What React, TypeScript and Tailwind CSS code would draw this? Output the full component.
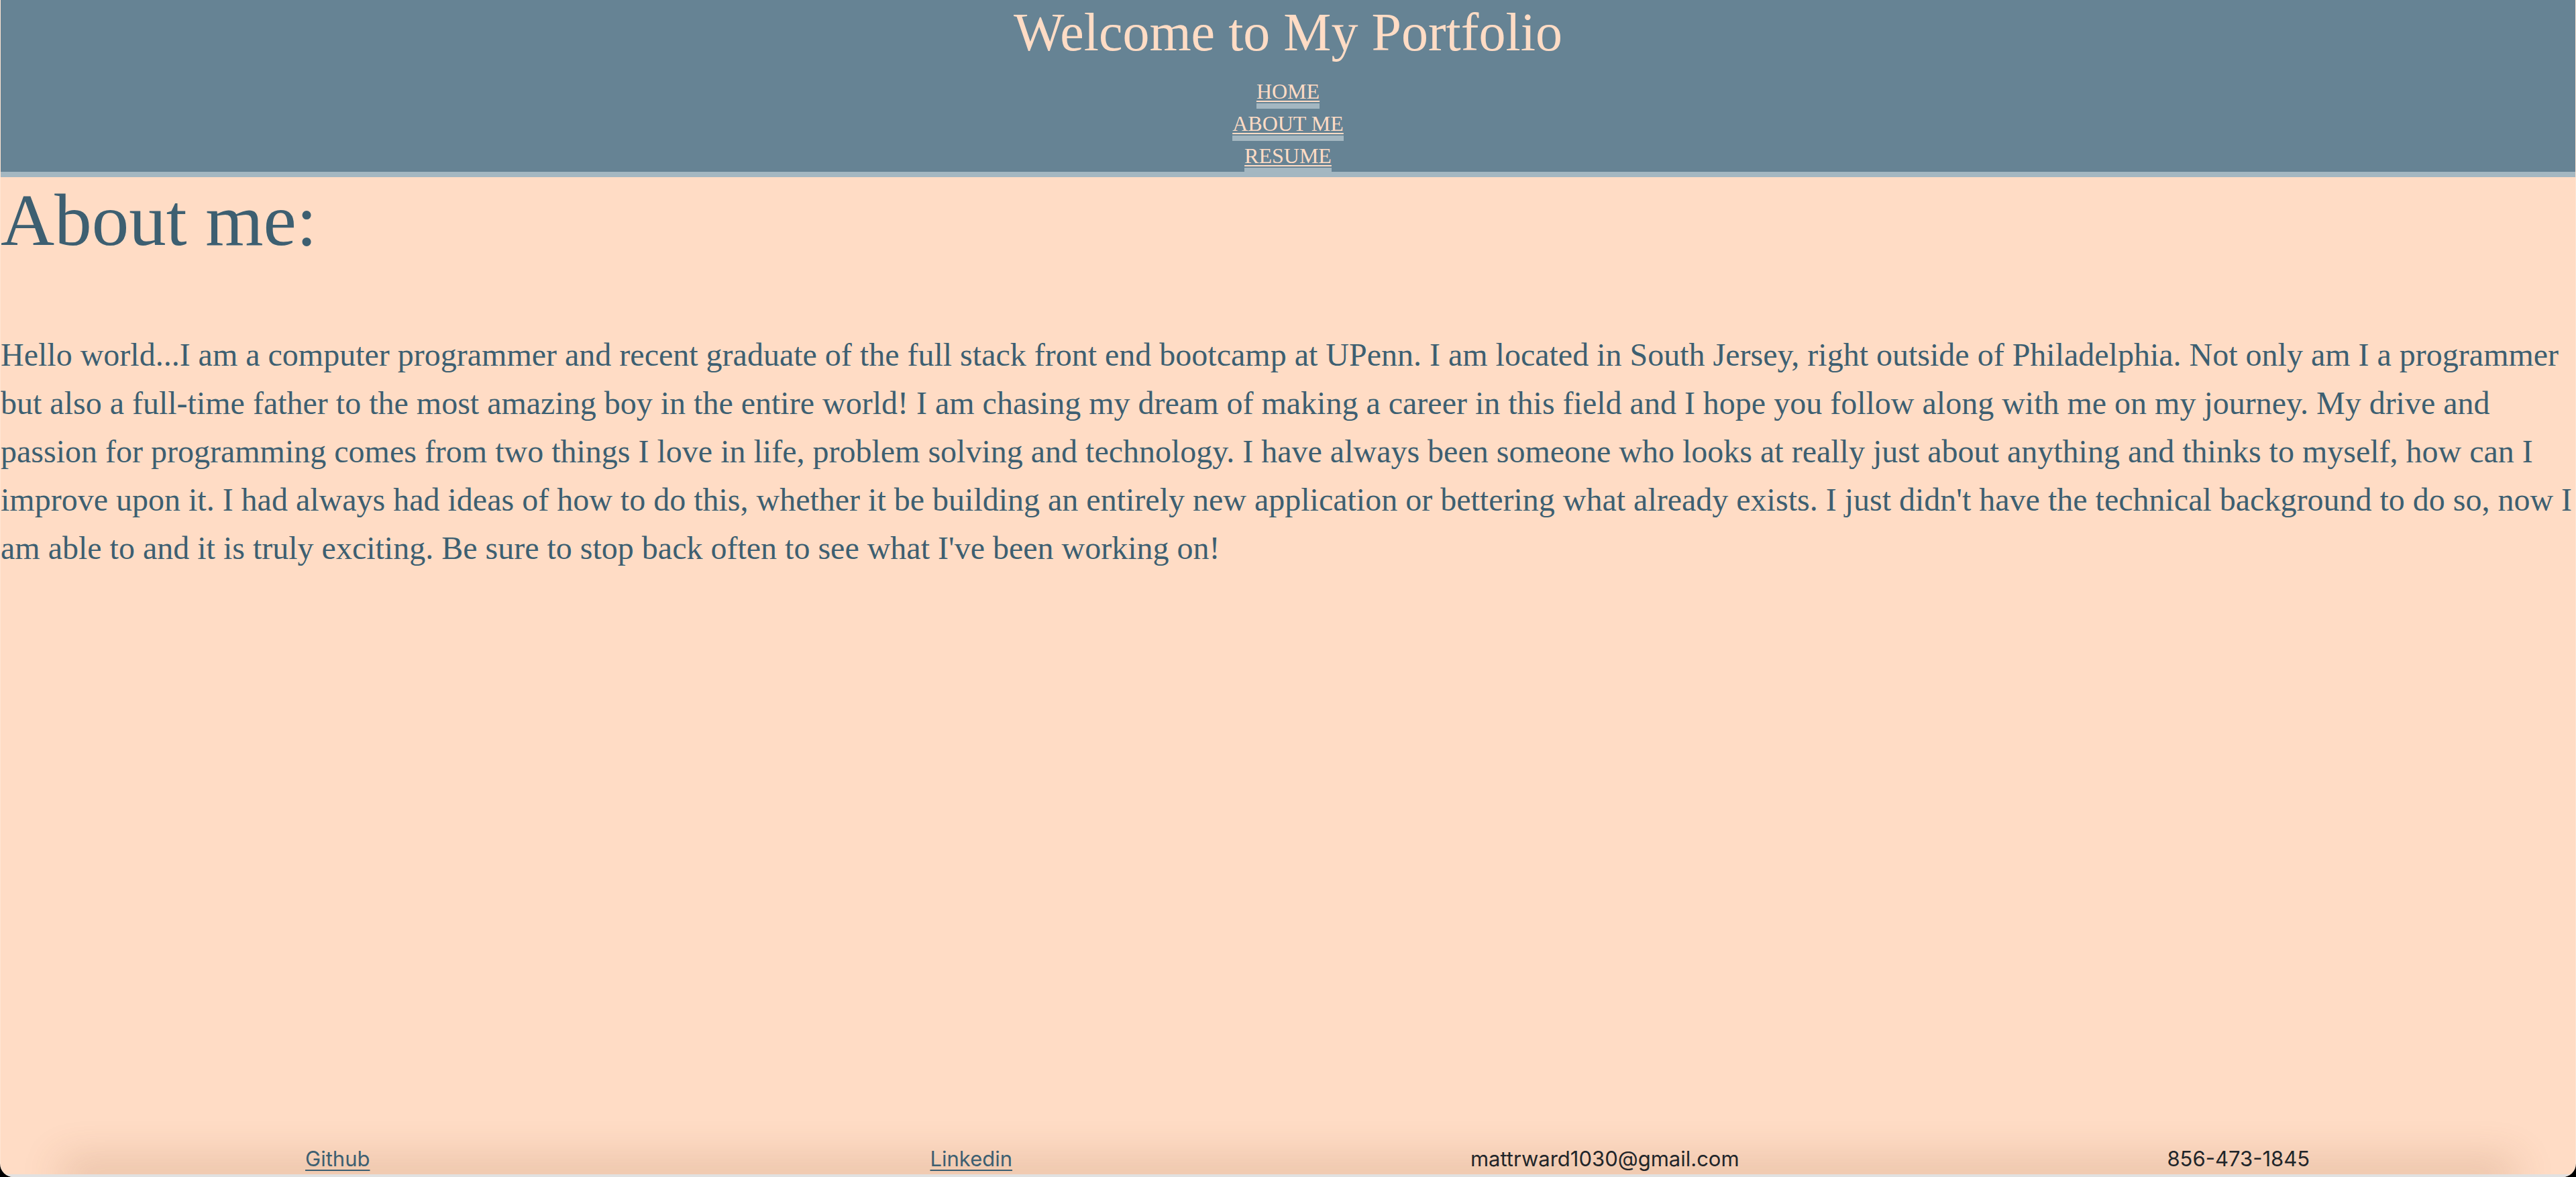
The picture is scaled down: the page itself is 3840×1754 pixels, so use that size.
import React from "react";

const navLinks = ["HOME", "ABOUT ME", "RESUME"];

const bio =
  "Hello world...I am a computer programmer and recent graduate of the full stack front end bootcamp at UPenn. I am located in South Jersey, right outside of Philadelphia. Not only am I a programmer but also a full-time father to the most amazing boy in the entire world! I am chasing my dream of making a career in this field and I hope you follow along with me on my journey. My drive and passion for programming comes from two things I love in life, problem solving and technology. I have always been someone who looks at really just about anything and thinks to myself, how can I improve upon it. I had always had ideas of how to do this, whether it be building an entirely new application or bettering what already exists. I just didn't have the technical background to do so, now I am able to and it is truly exciting. Be sure to stop back often to see what I've been working on!";

export default function App() {
  return (
    <div className="h-[1754px] bg-black">
      <div className="relative flex h-full flex-col overflow-hidden rounded-b-[20px] border-x border-white/25 bg-[#ffdcc5] font-['Liberation_Serif','Times_New_Roman',serif]">
        {/* header */}
        <header className="box-border h-[264px] shrink-0 border-b-8 border-[#a4b7c1] bg-[#668394] text-center text-[#ffdcc5]">
          <h1 className="h-[96px] text-[80px] leading-[96px]">Welcome to My Portfolio</h1>
          <nav className="mt-[22px] flex flex-col items-center gap-[4px]">
            {navLinks.map((link) => (
              <a
                key={link}
                href="#"
                className="block border-b-8 border-[#a4b7c1] text-[32px] leading-[36px] underline decoration-2 underline-offset-[3px]"
              >
                {link}
              </a>
            ))}
          </nav>
        </header>

        <main className="flex-1 text-[#3d5f71]">
          <h2 className="pt-[2px] text-[111px] leading-[124px]">About me:</h2>
          <p className="mt-[103px] text-[48px] leading-[72px]">{bio}</p>
        </main>

        {/* soft shadow along the bottom edge */}
        <div className="pointer-events-none absolute bottom-[4px] left-[110px] right-[110px] h-0 shadow-[0_0_60px_20px_rgba(140,80,40,0.24)]" />

        <footer className="relative grid grid-cols-4 px-[30px] pb-[5px] text-center font-['Inter',sans-serif] text-[31px] leading-[36px] text-[#212529]">
          <div>
            <a href="#" className="text-[#3d5f71] underline decoration-2 underline-offset-[5px]">
              Github
            </a>
          </div>
          <div>
            <a href="#" className="text-[#3d5f71] underline decoration-2 underline-offset-[5px]">
              Linkedin
            </a>
          </div>
          <div>mattrward1030@gmail.com</div>
          <div>856-473-1845</div>
        </footer>
        <div className="relative h-[4px] shrink-0 bg-[#e1e1e1]" />
      </div>
    </div>
  );
}
